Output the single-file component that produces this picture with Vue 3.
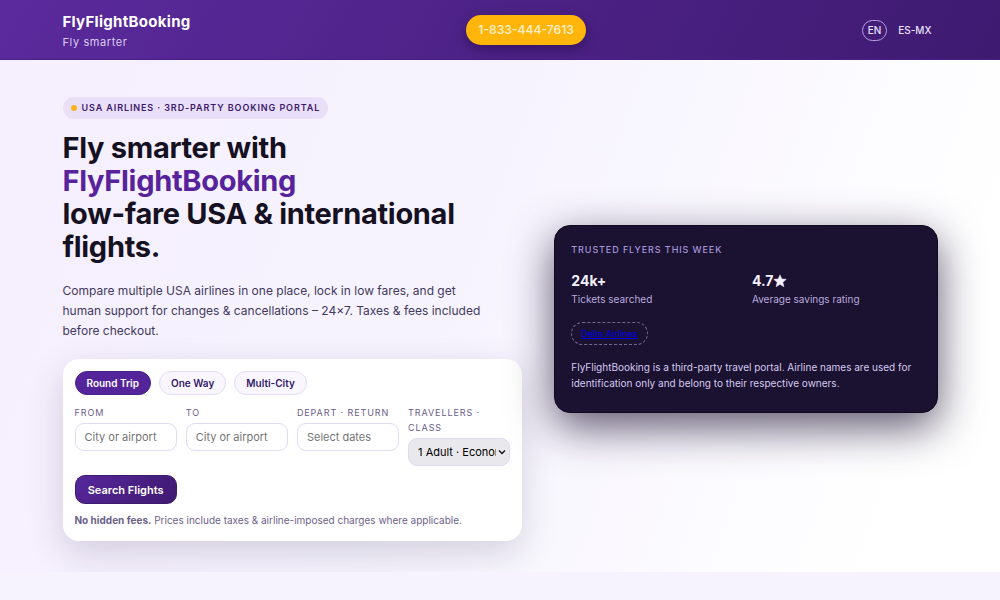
<template>
  <div class="page">
    <header class="site-header">
      <div class="wrap header-row">
        <div class="brand">
          <strong class="brand-name">FlyFlightBooking</strong>
          <span class="brand-tag">Fly smarter</span>
        </div>
        <a class="phone" href="tel:18334447613">1-833-444-7613</a>
        <nav class="langs">
          <a
            v-for="lang in langs"
            :key="lang"
            href="#"
            class="lang"
            :class="{ active: lang === activeLang }"
            @click.prevent="activeLang = lang"
          >{{ lang }}</a>
        </nav>
      </div>
    </header>

    <main class="hero">
      <div class="wrap hero-grid">
        <section>
          <div class="badge"><span class="dot"></span>USA Airlines · 3rd-Party Booking Portal</div>
          <h1>Fly smarter with <span class="accent">FlyFlightBooking</span><br />low-fare USA &amp; international flights.</h1>
          <p class="lead">
            Compare multiple USA airlines in one place, lock in low fares, and get human support for
            changes &amp; cancellations – 24×7. Taxes &amp; fees included before checkout.
          </p>

          <form class="search-card" @submit.prevent>
            <div class="tabs">
              <button
                v-for="trip in trips"
                :key="trip"
                type="button"
                class="tab"
                :class="{ active: trip === activeTrip }"
                @click="activeTrip = trip"
              >{{ trip }}</button>
            </div>
            <div class="fields">
              <div v-for="field in fields" :key="field.id" class="field">
                <label :for="field.id">{{ field.label }}</label>
                <input :id="field.id" type="text" :placeholder="field.placeholder" />
              </div>
              <div class="field">
                <label for="travellers">Travellers · Class</label>
                <div class="select-box">
                  <select id="travellers">
                    <option>1 Adult · Economy</option>
                    <option>2 Adults · Economy</option>
                    <option>1 Adult · Business</option>
                  </select>
                  <svg class="chevron" viewBox="0 0 8 8" aria-hidden="true">
                    <path d="M1 2.5l3 3 3-3" />
                  </svg>
                </div>
              </div>
              <button type="submit" class="submit">Search Flights</button>
            </div>
            <p class="note"><strong>No hidden fees.</strong> Prices include taxes &amp; airline-imposed charges where applicable.</p>
          </form>
        </section>

        <aside class="trust-card">
          <h2>Trusted flyers this week</h2>
          <div class="stats">
            <div>
              <div class="stat-value">24k+</div>
              <div class="stat-label">Tickets searched</div>
            </div>
            <div>
              <div class="stat-value">
                4.7<svg class="star" viewBox="0 0 24 24" aria-hidden="true">
                  <path d="M12 1.5l3 7 7.6.7-5.8 5 1.8 7.5L12 17.7l-6.6 4 1.8-7.5-5.8-5 7.6-.7z" />
                </svg>
              </div>
              <div class="stat-label">Average savings rating</div>
            </div>
          </div>
          <div class="airline"><a href="#">Delta Airlines</a></div>
          <p class="disclaimer">
            FlyFlightBooking is a third-party travel portal. Airline names are used for identification
            only and belong to their respective owners.
          </p>
        </aside>
      </div>
    </main>
  </div>
</template>

<script setup>
import { ref } from 'vue'

const langs = ['EN', 'ES-MX']
const activeLang = ref('EN')

const trips = ['Round Trip', 'One Way', 'Multi-City']
const activeTrip = ref('Round Trip')

const fields = [
  { id: 'from', label: 'From', placeholder: 'City or airport' },
  { id: 'to', label: 'To', placeholder: 'City or airport' },
  { id: 'dates', label: 'Depart · Return', placeholder: 'Select dates' },
]
</script>

<style>
body {
  background: #f6f3fe;
}
</style>

<style scoped>
.page,
.page * {
  box-sizing: border-box;
}

.page {
  font-family: Inter, 'Liberation Sans', sans-serif;
  color: #1b1230;
}

.wrap {
  max-width: 907px;
  margin: 0 auto;
  padding: 0 16px;
}

.site-header {
  background: linear-gradient(120deg, #5b2a9d, #3e1a70);
  border-bottom: 1px solid #452080;
}

.header-row {
  display: flex;
  align-items: center;
  justify-content: space-between;
  padding-top: 9px;
  padding-bottom: 8px;
}

.brand {
  display: flex;
  flex-direction: column;
  padding-top: 2px;
}

.brand-name {
  font-size: 15px;
  line-height: 22px;
  font-weight: 700;
  letter-spacing: 0.3px;
  color: #fff;
}

.brand-tag {
  font-size: 11px;
  line-height: 18px;
  letter-spacing: 0.6px;
  color: #d9ccf3;
}

.phone {
  padding: 6px 12px;
  border-radius: 999px;
  background: #ffb509;
  color: #fdebc0;
  font-size: 12px;
  line-height: 18px;
  font-weight: 600;
  text-decoration: none;
  box-shadow: 0 4px 12px rgba(20, 5, 50, 0.4);
}

.langs {
  display: flex;
  gap: 5px;
}

.lang {
  padding: 3px 5px;
  border: 1px solid transparent;
  border-radius: 999px;
  color: #e9e1fa;
  font-size: 10px;
  line-height: 13px;
  font-weight: 500;
  text-decoration: none;
}

.lang.active {
  border-color: #b7a1e4;
}

.hero {
  padding: 37px 0 31px;
  background: linear-gradient(110deg, #f6effe 0%, #f6f3fe 45%, #fff 90%);
}

.hero-grid {
  display: grid;
  grid-template-columns: 1.2fr 1fr;
  gap: 32px;
  align-items: center;
}

.badge {
  display: flex;
  align-items: center;
  gap: 5px;
  width: fit-content;
  padding: 4px 8px;
  border-radius: 999px;
  background: #e9e0f7;
  color: #3b1a6e;
  font-size: 9px;
  line-height: 14px;
  font-weight: 600;
  letter-spacing: 0.9px;
  text-transform: uppercase;
}

.dot {
  width: 6px;
  height: 6px;
  border-radius: 50%;
  background: #fbb320;
}

h1 {
  margin: 12px 0 18px;
  font-size: 29px;
  line-height: 33px;
  font-weight: 700;
  letter-spacing: -0.3px;
  color: #151022;
}

.accent {
  color: #56239c;
}

.lead {
  margin: 0 0 18px;
  max-width: 420px;
  font-size: 12px;
  line-height: 20px;
  color: #43395c;
}

.search-card {
  padding: 12px 12px 13px;
  border-radius: 16px;
  background: #fff;
  box-shadow: 0 12px 36px rgba(27, 18, 48, 0.16);
}

.tabs {
  display: flex;
  gap: 8px;
  margin-bottom: 10px;
}

.tab {
  padding: 4px 11px;
  border: 1px solid #e3dcf5;
  border-radius: 999px;
  background: #f9f6ff;
  color: #35186a;
  font-family: inherit;
  font-size: 10px;
  line-height: 14px;
  font-weight: 600;
  cursor: pointer;
}

.tab.active {
  border-color: #4a208a;
  background: #54249a;
  color: #fff;
}

.fields {
  display: grid;
  grid-template-columns: repeat(4, 1fr);
  gap: 9px;
  align-items: start;
}

.field {
  display: flex;
  flex-direction: column;
  gap: 3px;
  min-width: 0;
}

.field label {
  font-size: 9px;
  line-height: 15px;
  letter-spacing: 0.9px;
  text-transform: uppercase;
  color: #6a5d8c;
}

.field input,
.field select {
  display: block;
  width: 100%;
  height: 28px;
  padding: 0 9px;
  border: 1px solid #e0daf2;
  border-radius: 9px;
  background: #fff;
  font-family: inherit;
  font-size: 11px;
}

.select-box {
  position: relative;
}

.field select {
  appearance: none;
  padding-right: 13px;
  background: #e9e9ed;
  color: #000;
}

.chevron {
  position: absolute;
  top: 10px;
  right: 4px;
  width: 8px;
  height: 8px;
  fill: none;
  stroke: #111;
  stroke-width: 1.3;
  pointer-events: none;
}

.field input::placeholder {
  color: #757575;
}

.submit {
  height: 29px;
  padding: 0;
  border: 1px solid #3b1a70;
  border-radius: 10px;
  background: linear-gradient(135deg, #57279b, #3e1a70);
  color: #fff;
  font-family: inherit;
  font-size: 11px;
  font-weight: 600;
  cursor: pointer;
}

.note {
  margin: 9px 0 0;
  font-size: 10px;
  line-height: 15px;
  color: #6d6289;
}

.trust-card {
  padding: 16px;
  border-radius: 16px;
  border: 1px solid #0f0a20;
  background: #1b1130;
  color: #d6caf0;
  box-shadow: 0 14px 44px rgba(27, 17, 48, 0.7);
}

.trust-card h2 {
  margin: 0 0 14px;
  font-size: 9px;
  line-height: 15px;
  font-weight: 500;
  letter-spacing: 0.9px;
  text-transform: uppercase;
  color: #a594dc;
}

.stats {
  display: grid;
  grid-template-columns: 1fr 1fr;
  gap: 12px;
  margin-bottom: 15px;
}

.stat-value {
  font-size: 14px;
  line-height: 20px;
  font-weight: 700;
  color: #f4effe;
}

.star {
  width: 14px;
  height: 14px;
  vertical-align: -2px;
  fill: #f4effe;
  stroke: #f4effe;
  stroke-width: 1;
  stroke-linejoin: round;
}

.stat-label {
  font-size: 10px;
  line-height: 16px;
  color: #b9abdf;
}

.airline {
  width: fit-content;
  padding: 3px 9px;
  border: 1px dashed #75678f;
  border-radius: 999px;
  font-size: 9px;
  line-height: 15px;
}

.airline a {
  color: #0000ee;
}

.disclaimer {
  margin: 14px 0 5px;
  font-size: 10px;
  line-height: 16px;
}
</style>
